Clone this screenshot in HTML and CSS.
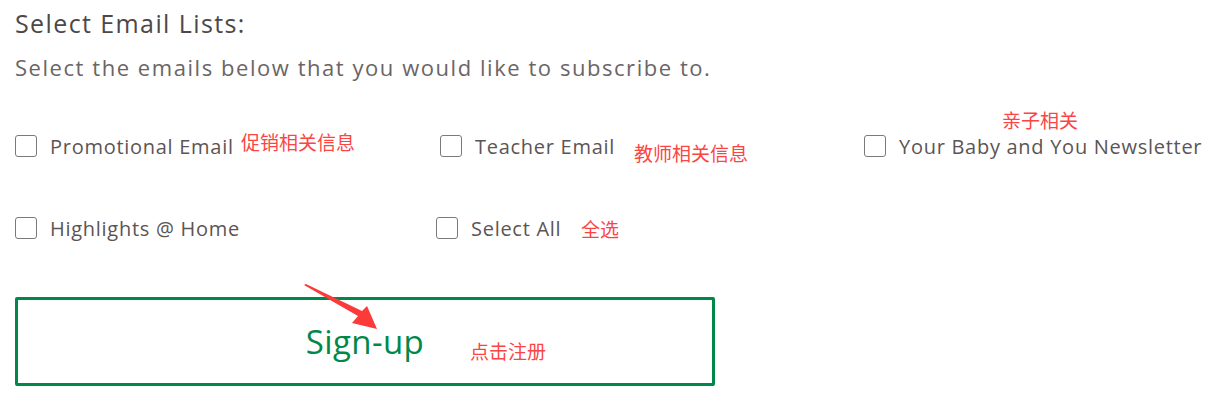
FILE: index.html
```html
<!DOCTYPE html>
<html lang="en">
<head>
    <meta charset="UTF-8">
    <meta name="viewport" content="width=device-width, initial-scale=1.0">
    <title>Select Email Lists</title>
    <link rel="stylesheet" href="styles.css">
</head>
<body>
    <div class="form">
        <h2 class="title">Select Email Lists:</h2>
        <p class="subtitle">Select the emails below that you would like to subscribe to.</p>

        <div class="lists">
            <label class="item"><input type="checkbox" class="box"> Promotional Email</label>
            <label class="item teacher"><input type="checkbox" class="box"> Teacher Email</label>
            <label class="item"><input type="checkbox" class="box"> Your Baby and You Newsletter</label>
            <label class="item"><input type="checkbox" class="box"> Highlights @ Home</label>
            <label class="item"><input type="checkbox" class="box"> Select All</label>
        </div>

        <button class="signup">Sign-up</button>
    </div>

    <!-- notes drawn over the page -->
    <div class="notes">
        <span class="note note-promo">促销相关信息</span>
        <span class="note note-teacher">教师相关信息</span>
        <span class="note note-baby">亲子相关</span>
        <span class="note note-all">全选</span>
        <span class="note note-signup">点击注册</span>
        <svg class="arrow" width="80" height="50" viewBox="0 0 80 50">
            <path d="M2 1 L56 32 L50 39 L75 45 L65 22 L60 27 L4 0 Z" fill="#fb3a3a"/>
        </svg>
    </div>
</body>
</html>
```

FILE: styles.css
```css
body {
    margin: 0;
    background: white;
    font-family: "Open Sans", Arial, sans-serif;
    color: #555;
}
.form {
    padding: 0 15px;
}
.title {
    margin: 7px 0 0;
    font-size: 25px;
    font-weight: 400;
    line-height: 32px;
    color: #4d4848;
    letter-spacing: 1.4px;
}
.subtitle {
    margin: 13px 0 0;
    font-size: 22px;
    line-height: 30px;
    color: #6a6565;
    letter-spacing: 1.55px;
}
.lists {
    display: grid;
    grid-template-columns: 421px 428px auto;
    grid-auto-rows: 82px;
    margin-top: 23px;
}
.item {
    display: flex;
    align-items: center;
    gap: 13px;
    font-size: 20px;
    color: #5b5555;
    letter-spacing: 0.72px;
    white-space: nowrap;
}
.teacher {
    padding-left: 4px;
}
.box {
    appearance: none;
    width: 22px;
    height: 22px;
    margin: 0;
    border: 1.5px solid #7a7a7a;
    border-radius: 3px;
    background: white;
    flex-shrink: 0;
}
.signup {
    display: block;
    width: 700px;
    height: 89px;
    margin-top: 28px;
    border: 3px solid #00884a;
    border-radius: 2px;
    background: white;
    color: #00884a;
    font-family: "Open Sans", sans-serif;
    font-size: 33px;
    letter-spacing: 0.4px;
}
.notes .note {
    position: absolute;
    font-family: "Noto Sans CJK SC", sans-serif;
    font-size: 19px;
    line-height: 20px;
    color: #fb4545;
}
.note-promo { left: 241px; top: 132px; }
.note-teacher { left: 634px; top: 143px; }
.note-baby { left: 1002px; top: 110px; }
.note-all { left: 581px; top: 219px; }
.note-signup { left: 470px; top: 341px; }
.arrow {
    position: absolute;
    left: 302px;
    top: 284px;
}
```
